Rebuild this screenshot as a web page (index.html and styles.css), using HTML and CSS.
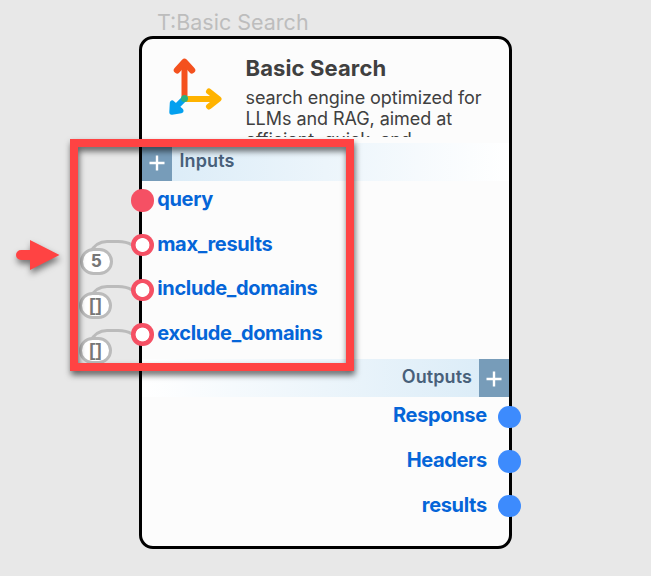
FILE: index.html
```
<!DOCTYPE html>
<html lang="en">
<head>
<meta charset="utf-8">
<title>Basic Search</title>
<link rel="stylesheet" href="styles.css">
</head>
<body>
<main class="canvas">
  <div class="node-tag">T:Basic Search</div>
  <section class="node">
    <header class="head">
      <svg class="logo" width="70" height="70" viewBox="0 0 70 70" fill="none" stroke-width="6" stroke-linecap="round" stroke-linejoin="round">
        <path d="M24.500 46V13" stroke="#f4511e"/>
        <path d="M17 20.200L24.500 12L32 20.200" stroke="#f4511e" stroke-width="6.500"/>
        <path d="M26 49H56" stroke="#ffb300"/>
        <path d="M49 41.500L58.500 49L49 56.500" stroke="#ffb300"/>
        <path d="M23 50L14 59" stroke="#03a0ef"/>
        <path d="M12.300 53L11.800 62.200L21 60.700Z" stroke="#03a0ef" fill="#03a0ef" stroke-width="5"/>
        <circle cx="24.500" cy="48.500" r="3.500" fill="#2bb07f"/>
      </svg>
      <div class="about">
        <h1 class="title">Basic Search</h1>
        <p class="desc">search engine optimized for<br>LLMs and RAG, aimed at<br>efficient, quick, and</p>
      </div>
    </header>
    <div class="bar bar-in"><span class="add"><svg width="16" height="16" viewBox="0 0 16 16"><path d="M8 .5V15.500M.5 8H15.500" stroke="#fff" stroke-width="2.400"/></svg></span><span class="bar-label">Inputs</span></div>
    <ul class="ports inputs">
      <li class="port"><i class="dot filled"></i><span class="port-name">query</span></li>
      <li class="port"><i class="dot"></i><span class="port-name">max_results</span>
        <svg class="wire" width="56" height="26" viewBox="0 0 56 26"><path d="M8 14C12 6 18 2.500 25 2.500H36C42 2.500 46 3.500 50 6"/></svg><b class="value">5</b></li>
      <li class="port"><i class="dot"></i><span class="port-name">include_domains</span>
        <svg class="wire" width="56" height="26" viewBox="0 0 56 26"><path d="M8 14C12 6 18 2.500 25 2.500H36C42 2.500 46 3.500 50 6"/></svg><b class="value list">[]</b></li>
      <li class="port"><i class="dot"></i><span class="port-name">exclude_domains</span>
        <svg class="wire" width="56" height="26" viewBox="0 0 56 26"><path d="M8 14C12 6 18 2.500 25 2.500H36C42 2.500 46 3.500 50 6"/></svg><b class="value list">[]</b></li>
    </ul>
    <div class="bar bar-out"><span class="bar-label">Outputs</span><span class="add"><svg width="16" height="16" viewBox="0 0 16 16"><path d="M8 .5V15.500M.5 8H15.500" stroke="#fff" stroke-width="2.400"/></svg></span></div>
    <ul class="ports outputs">
      <li class="port"><span class="port-name">Response</span><i class="dot"></i></li>
      <li class="port"><span class="port-name">Headers</span><i class="dot"></i></li>
      <li class="port"><span class="port-name">results</span><i class="dot"></i></li>
    </ul>
  </section>
  <div class="highlight"></div>
  <svg class="pointer" width="60" height="50" viewBox="0 0 60 50"><path d="M11 20H20V10L49.500 25L20 40V30H11A5 5 0 0 1 11 20Z" fill="#ff4343"/></svg>
</main>
</body>
</html>
```
FILE: styles.css
```
* { box-sizing: border-box; }
body { margin: 0; font-family: Inter, "Liberation Sans", sans-serif; }
.canvas { position: relative; width: 651px; height: 576px; overflow: hidden; background: #e8e8e8; }
.node-tag { position: absolute; left: 157px; top: 9px; font-size: 21.500px; line-height: 26px; color: #bdbdbd; white-space: nowrap; }
.node { position: absolute; left: 139px; top: 36px; width: 373px; height: 513px; border: 3px solid #000; border-radius: 14px; background: #fcfcfc; }
.head { display: flex; height: 104px; padding: 11px 0 0 18px; }
.logo { flex: none; }
.about { margin-left: 15.500px; padding-top: 4px; color: #404040; white-space: nowrap; }
.title { margin: 0; font-size: 22px; line-height: 28px; font-weight: 700; letter-spacing: .12px; }
.desc { margin: 5px 0 0; height: 50px; overflow: hidden; font-size: 18px; line-height: 21px; letter-spacing: -.06px; }
.bar { display: flex; height: 37.500px; }
.bar-in { background: linear-gradient(90deg, #d9ebf7, #fff); }
.bar-out { justify-content: flex-end; background: linear-gradient(90deg, #fff, #d9ebf7); }
.add { display: flex; align-items: center; justify-content: center; width: 30px; background: #779cb9; padding-top: 2px; }
.bar-label { padding: 0 7px; font-size: 18px; font-weight: 600; line-height: 35px; letter-spacing: .1px; color: #48607a; }
.bar-in .bar-label { padding-left: 7.500px; }
.bar-out .bar-label { line-height: 36px; }
.ports { list-style: none; margin: 0; padding: 0; }
.port { position: relative; display: flex; align-items: center; height: 44.700px; font-size: 20px; font-weight: 650; letter-spacing: -.34px; color: #0565d8; white-space: nowrap; }
.inputs { height: 179.500px; margin-top: -2.300px; margin-bottom: 1.500px; }
.dot { position: relative; z-index: 1; flex: none; width: 22.400px; height: 22.400px; border-radius: 50%; }
.inputs .dot { margin-left: -10.700px; background: radial-gradient(circle, #fff 6.500px, #f55064 7.300px); }
.inputs .dot.filled { background: #f55064; }
.inputs .port-name { margin: -3px 0 0 3.500px; }
.outputs { margin-top: -2.300px; }
.outputs .port { justify-content: flex-end; }
.outputs .dot { margin-right: -11.700px; background: #3d8bfd; }
.outputs .port-name { margin: -3px 11.500px 0 0; }
.wire { position: absolute; left: -60px; top: 16px; }
.wire path { fill: none; stroke: #bbb; stroke-width: 3; }
.value { position: absolute; left: -62px; top: 25px; width: 33px; height: 27px; border: 3px solid #bbb; border-radius: 14px; background: #fff; color: #777; font-family: "Liberation Sans", sans-serif; font-size: 18.500px; line-height: 20px; letter-spacing: 0; text-align: center; font-weight: 700; }
.value.list { left: -63px; top: 24.500px; }
.highlight { position: absolute; left: 70px; top: 139px; width: 284px; height: 232px; border: 8px solid #ff4343; filter: drop-shadow(1px 4px 3px rgba(0, 0, 0, .6)); }
.pointer { position: absolute; left: 10px; top: 230px; filter: drop-shadow(1px 4px 3px rgba(0, 0, 0, .5)); }
```
